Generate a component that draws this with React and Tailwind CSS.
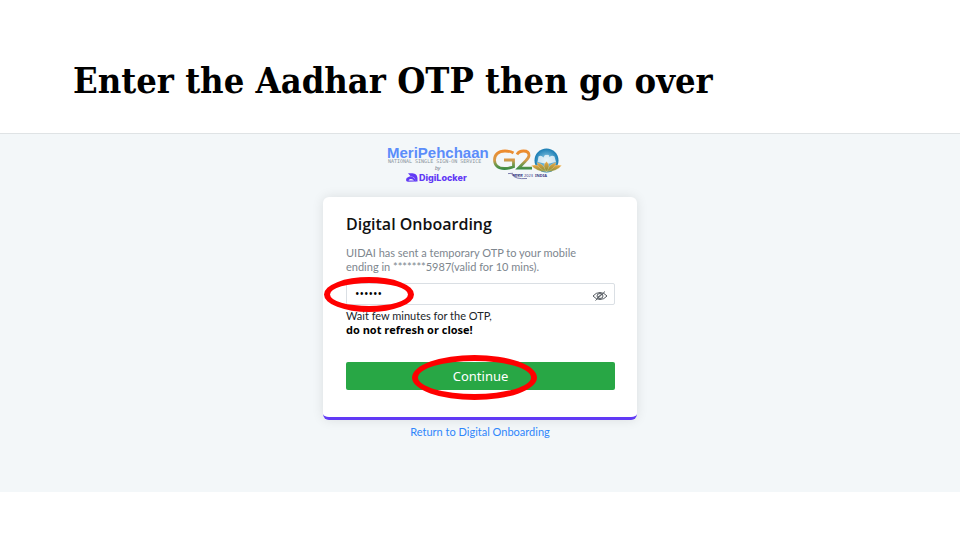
import React from "react";

function MeriPehchaanLogo() {
  return (
    <svg role="img" aria-label="MeriPehchaan by DigiLocker" viewBox="0 0 104 42" className="h-[42px] w-[104px]" fontFamily="'Liberation Sans', Arial, sans-serif">
      <text x="1" y="14" fontSize="15" fontWeight="700" fill="#5b8dfa">MeriPehchaan</text>
      <text x="2" y="19" fontFamily="'DejaVu Sans Mono', monospace" fontSize="5" fill="#8a949c">NATIONAL SINGLE SIGN-ON SERVICE</text>
      <text x="49" y="26" fontSize="5" fontStyle="italic" fill="#6b7280">by</text>
      <g fill="#613af5">
        <path d="M22 29.200 H26.500 Q31 29.500 31.500 34 V37.600 H29 Q30 34.500 27 33 Q24 32.500 22 29.200Z" />
        <path d="M20 36 Q20 33.400 22.500 33 Q24.500 31.600 26.500 33 Q29.500 34 29.500 37.600 L22 37.800 Q20 37.800 20 36Z" />
        <path d="M22.500 36.500 Q23 34.800 25 35 Q27 35.200 28 36.500Z" fill="#f3f7f9" />
      </g>
      <text x="33" y="37" fontFamily="Inter, sans-serif" fontSize="9" fontWeight="800" fill="#613af5">DigiLocker</text>
    </svg>
  );
}

function G20Logo() {
  return (
    <svg role="img" aria-label="G20 India" viewBox="0 0 72 36" className="h-[36px] w-[72px]">
      <defs>
        <linearGradient id="tricolour" gradientUnits="userSpaceOnUse" x1="0" y1="6" x2="0" y2="26">
          <stop offset="0" stopColor="#f08a2a" />
          <stop offset="0.500" stopColor="#d79a4a" />
          <stop offset="0.700" stopColor="#7f9a4b" />
          <stop offset="1" stopColor="#2d8a43" />
        </linearGradient>
        <radialGradient id="globe">
          <stop offset="0" stopColor="#9ed6ec" />
          <stop offset="1" stopColor="#1a7db4" />
        </radialGradient>
        <linearGradient id="petal" x1="0" y1="0" x2="0" y2="1">
          <stop offset="0" stopColor="#f2a540" />
          <stop offset="1" stopColor="#7f8f3c" />
        </linearGradient>
      </defs>
      <g fill="none" stroke="url(#tricolour)" strokeWidth="2.800">
        <path d="M22.500 9 Q19 7 14 7 C7 7 3.500 11 3.500 16 C3.500 21 7 24.500 13.500 24.500 Q18 24.500 22.500 22.800 V16 H13" />
        <path d="M26 10.500 Q28 7 32.500 7 Q38 7 38 11.300 Q38 14 34.500 17 L27.500 24.200 H41" />
      </g>
      <circle cx="55.500" cy="16.500" r="12" fill="url(#globe)" />
      <path d="M46.500 18 L47.500 12.500 Q50 10.500 52.500 13.500 Q53.500 10 56 11 Q58 10 58.500 13 Q61 11 63.500 12.500 L65 18 L56 20Z" fill="#ffffff" opacity="0.750" />
      <g fill="url(#petal)" stroke="#f8e6b8" strokeWidth="0.300">
        <path d="M55.500 27.500 Q45 27.500 40.500 21.500 Q49 19.500 55.500 27.500Z" />
        <path d="M55.500 27.500 Q66 27.500 70.500 21.500 Q62 19.500 55.500 27.500Z" />
        <path d="M55.500 27.500 Q47 25 46 18.500 Q53 20 55.500 27.500Z" />
        <path d="M55.500 27.500 Q64 25 65 18.500 Q58 20 55.500 27.500Z" />
        <path d="M55.500 27.500 Q50.500 22 55.500 17.500 Q60.500 22 55.500 27.500Z" />
      </g>
      <path d="M17 29.600 L22 29.300 M21 30.500 Q24 35.500 36 34.500" fill="none" stroke="#4b4b8e" strokeWidth="0.700" />
      <g fontFamily="'Noto Sans', sans-serif" fill="#3b3b86">
        <text x="21" y="33" fontSize="5" fontWeight="700">भारत</text>
        <text x="33" y="33" fontSize="4">2023</text>
        <text x="44" y="33" fontSize="4" fontWeight="700">INDIA</text>
      </g>
    </svg>
  );
}

function EyeOff() {
  return (
    <svg viewBox="0 0 16 12" aria-hidden="true" className="h-3 w-4" fill="none" stroke="#555b61" strokeWidth="1">
      <path d="M1 6 Q4 2.500 8 2.500 T15 6 Q12 9.500 8 9.500 T1 6Z" />
      <ellipse cx="8" cy="6" rx="3" ry="2.500" />
      <path d="M3.500 10.500 L13 1.500 M6 7 L10 4" />
    </svg>
  );
}

function Highlight({ className }) {
  return (
    <span aria-hidden="true" className={"pointer-events-none absolute rounded-[50%] border-6 border-[#ff0000] " + className} />
  );
}

export default function App() {
  return (
    <main className="min-h-screen bg-white font-['Lato','Noto_Sans',sans-serif]">
      <header className="px-[73px] pt-[52px] pb-[25px]">
        <h1 className="font-['DejaVu_Serif_Condensed','DejaVu_Serif',serif] text-[36px] leading-[56px] font-bold text-black">
          Enter the Aadhar OTP then go over
        </h1>
      </header>
      <section className="flex flex-col items-center border-t border-[#dfe3e5] bg-[#f3f7f9] pt-[10px] pb-[53px]">
        <div className="flex items-start gap-px pr-3">
          <MeriPehchaanLogo />
          <G20Logo />
        </div>
        <form
          onSubmit={(e) => e.preventDefault()}
          className="mt-[11px] w-full max-w-[314px] rounded-md border-b-3 border-[#613af5] bg-white pr-[22px] pl-[23px] pt-[15px] pb-[27px] shadow-[0_0_12px_rgba(0,0,0,0.1)]"
        >
          <h2 className="font-['Open_Sans',sans-serif] text-[16px] leading-6 font-semibold text-[#111111]">Digital Onboarding</h2>
          <label htmlFor="otp" className="mt-[10px] block text-[11px] leading-[14px] text-[#7d868e]">
            UIDAI has sent a temporary OTP to your mobile
            <br />
            ending in *******5987(valid for 10 mins).
          </label>
          <div className="relative mt-[9px] flex h-[22px] items-center rounded-xs border border-[#dadfe4] bg-white pr-[6px] pl-2">
            <input id="otp" type="password" defaultValue="598712" className="min-w-0 flex-1 bg-transparent font-['Open_Sans',sans-serif] text-[12px] leading-4 text-black outline-none" />
            <button type="button" aria-label="Show OTP" className="pt-1">
              <EyeOff />
            </button>
            <Highlight className="top-[-7px] left-[-23px] h-[35px] w-[90px]" />
          </div>
          <p className="mt-1 text-[11px] leading-[14px] text-[#212529]">
            Wait few minutes for the OTP,
            <br />
            <strong className="font-['Open_Sans',sans-serif] font-bold text-black">do not refresh or close!</strong>
          </p>
          <div className="relative mt-[25px]">
            <button type="submit" className="block h-7 w-full rounded-xs bg-[#28a745] pt-px font-['Noto_Sans',sans-serif] text-[13px] text-white">
              Continue
            </button>
            <Highlight className="top-[-7px] left-[66px] h-[45px] w-[125px]" />
          </div>
        </form>
        <a href="#onboarding" className="mt-[5px] text-[11px] leading-[14px] text-[#2f86fb]">
          Return to Digital Onboarding
        </a>
      </section>
    </main>
  );
}
